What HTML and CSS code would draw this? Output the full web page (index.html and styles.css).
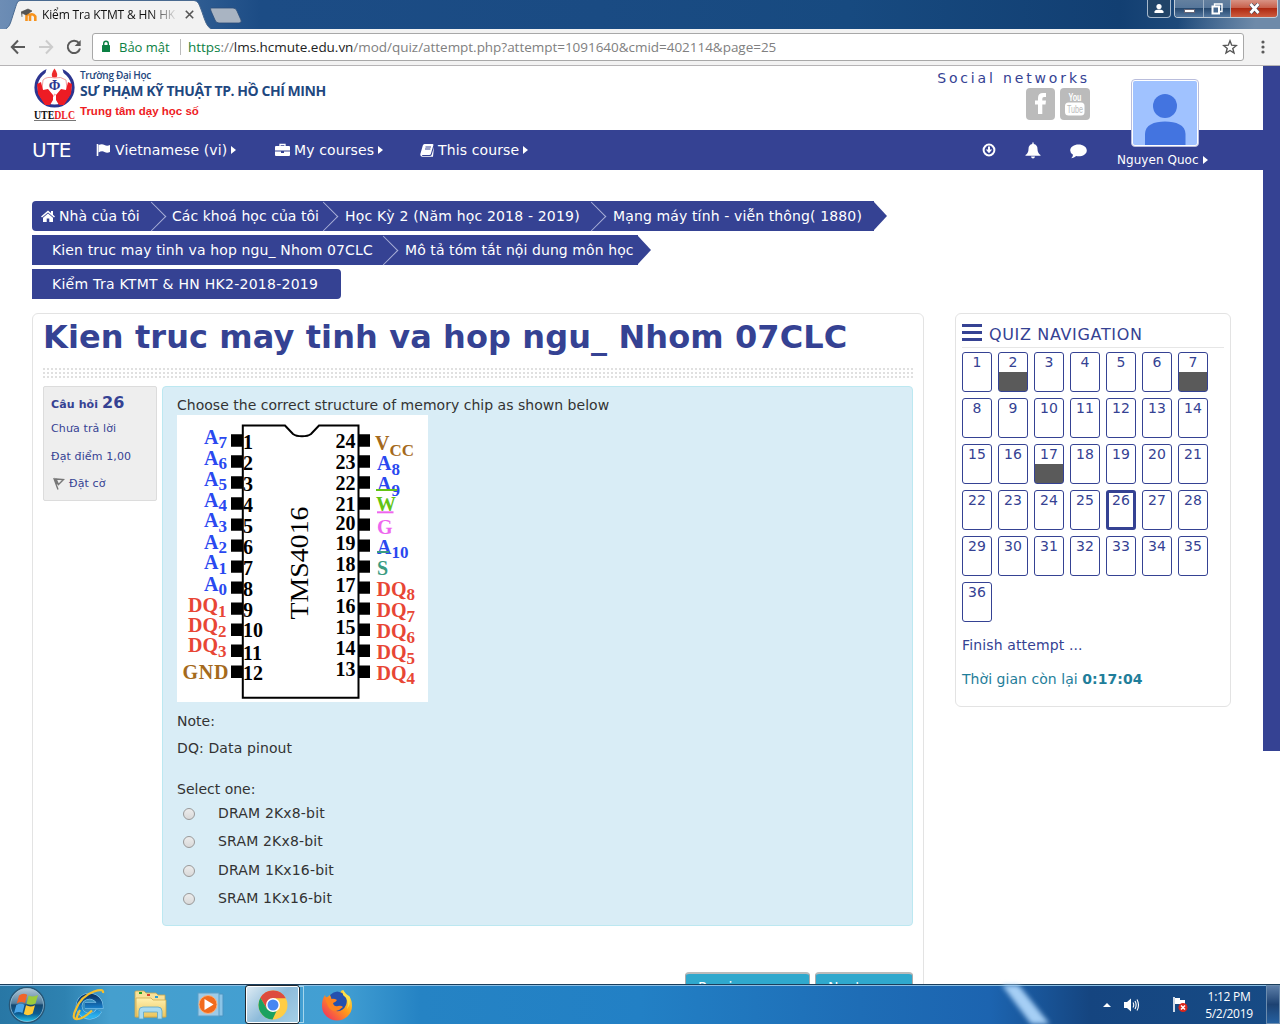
FILE: index.html
```html
<!DOCTYPE html>
<html lang="vi">
<head>
<meta charset="utf-8">
<title>Kiểm Tra KTMT &amp; HN HK2-2018-2019</title>
<link rel="stylesheet" href="styles.css">
</head>
<body>
<svg width="0" height="0" class="defs">
  <defs>
    <linearGradient id="orb" x1="0" y1="0" x2="0" y2="1"><stop offset="0" stop-color="#b9cbd8"/><stop offset=".45" stop-color="#547f9f"/><stop offset=".5" stop-color="#14476f"/><stop offset=".75" stop-color="#0c5c92"/><stop offset="1" stop-color="#25d0f5"/></linearGradient>
    <linearGradient id="ie" x1="0" y1="0" x2="0" y2="1"><stop offset="0" stop-color="#0b3a6c"/><stop offset=".5" stop-color="#1573bd"/><stop offset="1" stop-color="#2bb2ee"/></linearGradient>
    <linearGradient id="folder" x1="0" y1="0" x2="0" y2="1"><stop offset="0" stop-color="#fff1b0"/><stop offset="1" stop-color="#ecc55d"/></linearGradient>
    <linearGradient id="fox" x1="1" y1="0" x2="0" y2="1"><stop offset="0" stop-color="#fff04a"/><stop offset=".45" stop-color="#ff9a1a"/><stop offset="1" stop-color="#f0206a"/></linearGradient>
  </defs>
</svg>

<header class="titlebar">
  <svg class="tab-shape" width="250" height="29" viewBox="0 0 250 29">
    <path d="M6 29C10 27 11 21 14 12C17 3 17 1 21 1H194C198 1 199 4 202 12C205 21 207 27 211 29Z" fill="#f2f2f2"/>
    <path d="M6 28.500C10 27 11 21 14 12C17 3 17 .5 21 .5H194C198 .5 199 4 202 12C205 21 207 27 211 28.500" fill="none" stroke="#4a6a90"/>
    <path d="M211 8H233Q236 8 237 11L241 20Q242 23 239 23H219Q216 23 215 20L211 11Q210 8 211 8Z" fill="#a9b4c2" stroke="#2b4d78" stroke-width=".8"/>
  </svg>
  <div class="tab">
    <svg width="16" height="14" viewBox="0 0 16 14"><path d="M5.500 13V8.500Q5.500 6.300 7.300 6.300T9 8.500V13M9 13V8.500Q9 6.300 11 6.300T14.300 8.500V13" fill="none" stroke="#f7931e" stroke-width="2.600"/><path d="M0 4L7 1L11 3L5 7L1 5V9" fill="#555" stroke="#444" stroke-width=".6"/></svg>
    <span class="tab-title">Kiểm Tra KTMT &amp; HN HK</span>
    <svg class="tab-close" width="9" height="9" viewBox="0 0 9 9"><path d="M.8.8L8.200 8.200M8.200.8L.8 8.200" stroke="#555" stroke-width="1.600"/></svg>
  </div>
  <div class="window-buttons">
    <span class="wb user"><svg width="12" height="11" viewBox="0 0 12 11"><circle cx="6" cy="3.500" r="2.600" fill="#fff"/><path d="M1.500 10V8.500Q2 6.500 6 6.500T10.500 8.500V10Z" fill="#fff"/></svg></span>
    <span class="wb-group">
      <span class="wb min"><i class="bar"></i></span>
      <span class="wb max"><svg width="12" height="12" viewBox="0 0 12 12"><path d="M3.500 3V1H11V8.500H9" fill="none" stroke="#fff" stroke-width="1.400"/><rect x="1.500" y="3.500" width="6.500" height="7" fill="#486a90" stroke="#fff" stroke-width="2"/></svg></span>
      <span class="wb close"><svg width="13" height="11" viewBox="0 0 13 11"><path d="M2.500 1L10.500 10M10.500 1L2.500 10" stroke="#444b5e" stroke-width="4"/><path d="M2.500 1L10.500 10M10.500 1L2.500 10" stroke="#fff" stroke-width="2.700"/></svg></span>
    </span>
  </div>
</header>

<div class="toolbar">
  <svg class="nav-arrow" width="16" height="16" viewBox="0 0 16 16"><path d="M15 8H2M8 1.500L1.800 8L8 14.500" fill="none" stroke="#5a5a5a" stroke-width="2"/></svg>
  <svg class="nav-arrow" width="16" height="16" viewBox="0 0 16 16"><path d="M1 8H14M8 1.500L14.200 8L8 14.500" fill="none" stroke="#ccc" stroke-width="2"/></svg>
  <svg class="reload" width="16" height="16" viewBox="0 0 16 16"><path d="M13 4.200A6.200 6.200 0 1 0 14 9.500" fill="none" stroke="#5a5a5a" stroke-width="2"/><path d="M14.700 1V7H8.700Z" fill="#5a5a5a"/></svg>
  <div class="address">
    <svg width="10" height="13" viewBox="0 0 10 13"><rect x="1" y="5" width="8" height="7" rx=".6" fill="#0b8043"/><path d="M2.700 6V3.500A2.300 2.300 0 0 1 7.300 3.500V6" fill="none" stroke="#0b8043" stroke-width="1.400"/></svg>
    <span class="secure">Bảo mật</span>
    <span class="url"><b>https</b>://<em>lms.hcmute.edu.vn</em>/mod/quiz/attempt.php?attempt=1091640&amp;cmid=402114&amp;page=25</span>
    <svg class="star" width="16" height="16" viewBox="0 0 16 16"><path d="M8 1.800L9.700 6.200L14.400 6.500L10.800 9.500L12 14L8 11.500L4 14L5.200 9.500L1.600 6.500L6.300 6.200Z" fill="none" stroke="#555" stroke-width="1.400"/></svg>
  </div>
  <svg class="menu" width="4" height="16" viewBox="0 0 4 16"><g fill="#5a5a5a"><circle cx="2" cy="3" r="1.600"/><circle cx="2" cy="8" r="1.600"/><circle cx="2" cy="13" r="1.600"/></g></svg>
</div>

<div class="viewport">
  <div class="page">
    <div class="site-header">
      <div class="brand">
        <svg width="44" height="54" viewBox="0 0 44 54">
          <circle cx="21.500" cy="20.500" r="18.500" fill="#fff" stroke="#2d3590" stroke-width="3.200"/>
          <path d="M12 8A16 16 0 0 1 31 8L29 0H14Z" fill="#fff"/>
          <path d="M21.500 1.500Q17.500 7 19.500 10.500H23.500Q25.500 7 21.500 1.500Z" fill="#ee2b2b"/>
          <path d="M21.500 11Q14 9 10 13L9 22L14 29Q18 31 21 29L21.500 27Q25 31 29 29L34 22L33 13Q28 9 21.500 11Z" fill="#fff" stroke="#e88" stroke-width=".8"/>
          <path d="M4 17L8 15L10 23L15 22L20 28V33L17 38H12L5 27ZM39 17L35 15L33 23L28 22L23 28V33L26 38H31L38 27Z" fill="#ed1c24"/>
          <text x="21.500" y="23" class="phi">Φ</text>
          <text x="1" y="51.500" class="ute" textLength="41" lengthAdjust="spacingAndGlyphs">UTE<tspan fill="#ed1c24">DLC</tspan></text>
          <path d="M1 53.500H43" stroke="#777" stroke-width="1"/>
        </svg>
        <div class="brand-text">
          <span class="line-a">Trường Đại Học</span>
          <span class="line-b">SƯ PHẠM KỸ THUẬT TP. HỒ CHÍ MINH</span>
          <span class="line-c">Trung tâm dạy học số</span>
        </div>
      </div>
      <div class="social">
        <span class="social-title">Social networks</span>
        <div class="social-icons">
          <svg width="29" height="32" viewBox="0 0 29 32"><rect width="29" height="32" rx="4" fill="#bbb"/><path d="M12 26V16.500H9V12.500H12V10Q12 5 17 5H20V9H18Q16.300 9 16.300 10.800V12.500H20L19.500 16.500H16.300V26Z" fill="#fff"/></svg>
          <svg width="30" height="32" viewBox="0 0 30 32"><rect width="30" height="32" rx="4" fill="#bbb"/><text x="8.500" y="13" class="you" textLength="13" lengthAdjust="spacingAndGlyphs">You</text><rect x="5" y="14.500" width="19.500" height="13" rx="3.500" fill="#fff"/><text x="7" y="25" class="tube" textLength="16" lengthAdjust="spacingAndGlyphs">Tube</text></svg>
        </div>
      </div>
    </div>
    <nav class="navbar">
      <span class="site-name">UTE</span>
      <span class="nav-item lang"><svg width="15" height="14" viewBox="0 0 15 14"><path d="M1.500 1V13" stroke="#fff" stroke-width="1.600"/><path d="M2.500 2Q6 .5 8.500 2T14 2V9Q11 10.500 8.500 9T2.500 9.500Z" fill="#fff"/></svg><span>Vietnamese (vi)</span><i class="caret"></i></span>
      <span class="nav-item my"><svg width="15" height="14" viewBox="0 0 15 14"><path d="M5 3V1.500H10V3" fill="none" stroke="#fff" stroke-width="1.300"/><path d="M0 4Q0 3 1 3H14Q15 3 15 4V7.500H0ZM0 8.500H6V10H9V8.500H15V12Q15 13 14 13H1Q0 13 0 12Z" fill="#fff"/></svg><span>My courses</span><i class="caret"></i></span>
      <span class="nav-item this"><svg width="14" height="14" viewBox="0 0 14 14"><path d="M4.500 1H12.500Q13.800 1.200 13.300 2.500L10.800 11Q10.500 12 9.300 12H2.500Q1.500 12.500 2.500 13H10Q11.200 13 11.600 12L14 4L13 13.800H2Q-.3 13 .5 10.500L2.800 2.500Q3.200 1.200 4.500 1Z" fill="#fff"/><path d="M5.500 4H11M5 6H10.400" stroke="#354293"/></svg><span>This course</span><i class="caret"></i></span>
      <div class="nav-tools">
        <svg width="14" height="14" viewBox="0 0 14 14"><circle cx="7" cy="7" r="5.400" fill="none" stroke="#fff" stroke-width="2"/><path d="M6 3.500H8V6.500H10.200L7 10.200L3.800 6.500H6Z" fill="#fff"/></svg>
        <svg width="16" height="17" viewBox="0 0 16 17"><path d="M7.300.5H8.700V2Q12.500 2.800 12.500 7Q12.500 11 15.500 13V13.800H.5V13Q3.500 11 3.500 7Q3.500 2.800 7.300 2ZM6 14.500H10Q9.700 16.500 8 16.500T6 14.500Z" fill="#fff"/></svg>
        <svg class="bubble" width="17" height="15" viewBox="0 0 17 15"><path d="M8.500.5C13 .5 16.800 3 16.800 6.500S13 12.300 8.500 12.300Q7.200 12.300 6.200 12Q4.200 14 1.300 14.200Q3 12.700 3 10.800Q.2 9 .2 6.500C.2 3 4 .5 8.500.5Z" fill="#fff"/></svg>
      </div>
      <div class="user-menu">
        <svg class="avatar" width="68" height="68" viewBox="0 0 68 68"><rect x=".5" y=".5" width="67" height="67" rx="3.500" fill="#fff" stroke="#b9bddc"/><rect x="2" y="2" width="64" height="64" rx="2" fill="#a0c2ff"/><circle cx="34" cy="27" r="12" fill="#4374e0"/><path d="M14 66V55C14 46 23 42.500 34 42.500S54.500 46 54.500 55V66Z" fill="#4374e0"/></svg>
        <span class="user-name">Nguyen Quoc<i class="caret"></i></span>
      </div>
    </nav>

    <div class="crumbs">
      <div class="crumb-row">
        <span class="crumb home"><svg width="14" height="12" viewBox="0 0 14 12"><path d="M7 .5L10 3V1H12V4.800L14 6.500L13 7.500L7 2.500L1 7.500L0 6.500ZM7 3.600L12 7.800V12H8.300V8.500H5.700V12H2V7.800Z" fill="#fff"/></svg><span>Nhà của tôi</span></span>
        <span class="crumb courses sep"><span>Các khoá học của tôi</span></span>
        <span class="crumb term sep"><span>Học Kỳ 2 (Năm học 2018 - 2019)</span></span>
        <span class="crumb network sep tip"><span>Mạng máy tính - viễn thông( 1880)</span></span>
      </div>
      <div class="crumb-row">
        <span class="crumb subject"><span>Kien truc may tinh va hop ngu_ Nhom 07CLC</span></span>
        <span class="crumb summary sep tip"><span>Mô tả tóm tắt nội dung môn học</span></span>
      </div>
      <div class="crumb-row">
        <span class="crumb exam"><span>Kiểm Tra KTMT &amp; HN HK2-2018-2019</span></span>
      </div>
    </div>

    <div class="columns">
      <main class="panel">
        <h1>Kien truc may tinh va hop ngu_ Nhom 07CLC</h1>
        <div class="dots"></div>
        <div class="question">
          <aside class="info">
            <p class="q-no">Câu hỏi <b>26</b></p>
            <p class="q-state">Chưa trả lời</p>
            <p class="q-grade">Đạt điểm 1,00</p>
            <p class="q-flag"><svg width="12" height="13" viewBox="0 0 12 13"><path d="M.8 1L5 12.500M2.500 1.500L4 7.500M3 2L10.500 2.500L5.500 7.500Z" fill="none" stroke="#777" stroke-width="1.400"/></svg><span>Đặt cờ</span></p>
          </aside>
          <section class="formulation">
            <p class="q-text">Choose the correct structure of memory chip as shown below</p>
            <svg class="chip" width="251" height="287" viewBox="0 0 251 287">
              <rect width="251" height="287" fill="#fff"/>
              <path d="M65.800 10.500H108L116 19Q119 21.300 125 21.300Q131 21.300 134 19L142 10.500H181.500V282.800H65.800Z" fill="none" stroke="#000" stroke-width="2"/>
              <path d="M60 19.300V263" stroke="#000" stroke-width="12" stroke-dasharray="12.400 8.620"/>
              <path d="M187 19.300V263" stroke="#000" stroke-width="12" stroke-dasharray="12.400 8.620"/>
              <g class="num">
                <text x="66" y="34">1</text><text x="66" y="55">2</text><text x="66" y="76">3</text><text x="66" y="97">4</text><text x="66" y="118">5</text><text x="66" y="139">6</text><text x="66" y="160">7</text><text x="66" y="181">8</text><text x="66" y="201.500">9</text><text x="66" y="222">10</text><text x="66" y="244.500">11</text><text x="66" y="265">12</text>
              </g>
              <g class="num end">
                <text x="178.500" y="33">24</text><text x="178.500" y="53.500">23</text><text x="178.500" y="74.500">22</text><text x="178.500" y="95.500">21</text><text x="178.500" y="114.500">20</text><text x="178.500" y="135">19</text><text x="178.500" y="155.500">18</text><text x="178.500" y="177">17</text><text x="178.500" y="198">16</text><text x="178.500" y="219">15</text><text x="178.500" y="240">14</text><text x="178.500" y="261">13</text>
              </g>
              <g class="blue">
                <text x="27" y="28.700">A<tspan class="sub" dy="4.500">7</tspan></text><text x="27" y="49.700">A<tspan class="sub" dy="4.500">6</tspan></text><text x="27" y="70.700">A<tspan class="sub" dy="4.500">5</tspan></text><text x="27" y="91.700">A<tspan class="sub" dy="4.500">4</tspan></text><text x="27" y="112.300">A<tspan class="sub" dy="4.500">3</tspan></text><text x="27" y="133.700">A<tspan class="sub" dy="4.500">2</tspan></text><text x="27" y="154.300">A<tspan class="sub" dy="4.500">1</tspan></text><text x="27" y="175.700">A<tspan class="sub" dy="4.500">0</tspan></text>
                <text x="200" y="55">A<tspan class="sub" dy="4.500">8</tspan></text><text x="200" y="76">A<tspan class="sub" dy="4.500">9</tspan></text><text x="200" y="138.700">A<tspan class="sub" dy="4.500">10</tspan></text>
              </g>
              <g class="red">
                <text x="11" y="197.300">DQ<tspan class="sub" dy="4.500">1</tspan></text><text x="11" y="217.300">DQ<tspan class="sub" dy="4.500">2</tspan></text><text x="11" y="237">DQ<tspan class="sub" dy="4.500">3</tspan></text>
                <text x="199.500" y="180.700">DQ<tspan class="sub" dy="4.500">8</tspan></text><text x="199.500" y="202">DQ<tspan class="sub" dy="4.500">7</tspan></text><text x="199.500" y="223">DQ<tspan class="sub" dy="4.500">6</tspan></text><text x="199.500" y="244">DQ<tspan class="sub" dy="4.500">5</tspan></text><text x="199.500" y="264.700">DQ<tspan class="sub" dy="4.500">4</tspan></text>
              </g>
              <g class="brown"><text x="5.500" y="263.500" textLength="46">GND</text><text x="198" y="34.500">V<tspan class="sub" dy="6">CC</tspan></text></g>
              <text x="199" y="96" class="green">W</text><path d="M199 75H220" stroke="#62c414" stroke-width="2"/>
              <text x="200" y="118.700" class="pink">G</text><path d="M200 97.300H216.500" stroke="#ee66ee" stroke-width="2"/>
              <text x="200" y="160" class="teal">S</text><path d="M200 137H212" stroke="#3a9c82" stroke-width="2"/>
              <text class="part" transform="translate(130.500 204.500) rotate(-90)" textLength="113" lengthAdjust="spacingAndGlyphs">TMS4016</text>
            </svg>
            <p class="note">Note:</p>
            <p class="note-2">DQ: Data pinout</p>
            <p class="select">Select one:</p>
            <div class="answers">
              <label><input type="radio" name="a"><span>DRAM 2Kx8-bit</span></label>
              <label><input type="radio" name="a"><span>SRAM 2Kx8-bit</span></label>
              <label><input type="radio" name="a"><span>DRAM 1Kx16-bit</span></label>
              <label><input type="radio" name="a"><span>SRAM 1Kx16-bit</span></label>
            </div>
          </section>
        </div>
        <div class="buttons"><span class="btn previous">Previous page</span><span class="btn next">Next page</span></div>
      </main>
      <aside class="quiz-nav">
        <h2><svg width="20" height="17" viewBox="0 0 20 17"><path d="M0 1.500H20M0 8.500H20M0 15.500H20" stroke="#354293" stroke-width="3"/></svg><span>QUIZ NAVIGATION</span></h2>
        <div class="grid">
          <a>1</a><a class="done">2</a><a>3</a><a>4</a><a>5</a><a>6</a><a class="done">7</a>
          <a>8</a><a>9</a><a>10</a><a>11</a><a>12</a><a>13</a><a>14</a>
          <a>15</a><a>16</a><a class="done">17</a><a>18</a><a>19</a><a>20</a><a>21</a>
          <a>22</a><a>23</a><a>24</a><a>25</a><a class="current">26</a><a>27</a><a>28</a>
          <a>29</a><a>30</a><a>31</a><a>32</a><a>33</a><a>34</a><a>35</a>
          <a>36</a>
        </div>
        <p class="finish">Finish attempt ...</p>
        <p class="timer">Thời gian còn lại <b>0:17:04</b></p>
      </aside>
    </div>
  </div>
  <div class="scrollbar"><div class="thumb"></div></div>
</div>

<footer class="taskbar">
  <svg class="beam" width="90" height="40" viewBox="0 0 90 40"><path d="M10 0H27L59 40H40Z" fill="#a6cff5"/></svg>
  <div class="apps">
    <span class="slot start"><svg width="38" height="38" viewBox="0 0 38 38"><circle cx="19" cy="19" r="17.500" fill="url(#orb)" stroke="#285777" stroke-width="1.500"/><circle cx="19" cy="19" r="16.500" fill="none" stroke="#9cc5dd" stroke-width=".7"/><path d="M11 9.500Q15 6.500 19.200 8.800L17 17Q13 15 8.800 17.500Z" fill="#f0642a"/><path d="M20.700 9.500Q25 11.500 30 9L27.500 17.500Q23 20 18.500 17.700Z" fill="#9ccb3c"/><path d="M8.300 19Q12.500 16.700 16.600 18.700L14.400 27Q10.500 25 6 27.500Z" fill="#49a5e8"/><path d="M18 19.300Q22.500 21.500 27 19.200L24.700 27.500Q20 30.500 15.800 28Z" fill="#fdca37"/></svg></span>
    <span class="slot ie"><svg width="34" height="34" viewBox="0 0 34 34"><path d="M27 22.500A10.500 10 0 1 1 28 17.500H13" fill="none" stroke="#8fd0f5" stroke-width="6.400"/><path d="M27 22.500A10.500 10 0 1 1 28 17.500H13" fill="none" stroke="url(#ie)" stroke-width="5.400"/><path d="M8 22Q3 31 6 31Q11 31 20 22.500M6 31Q-1 32 3.500 22Q9 8 22 3.500Q32 0 31 5" fill="none" stroke="#f3bf2f" stroke-width="2.200"/></svg></span>
    <span class="slot explorer"><svg width="34" height="32" viewBox="0 0 34 32"><path d="M1 3Q1 2 2 2H10L12 4H22L24 6H31V28H1Z" fill="#f7e19a" stroke="#c9a64a" stroke-width=".8"/><path d="M21 7H24V9H21Z" fill="#2b9ed6"/><path d="M5 3H8V5H5Z" fill="#22a022"/><path d="M13 5H16V7H13Z" fill="#d8432e"/><path d="M2 9H17L19 11H32V28H2Z" fill="url(#folder)" stroke="#cfaa4b" stroke-width=".8"/><path d="M5 30V22Q5 18 9 18H24Q28 18 28 22V30H23.500V23H9.500V30Z" fill="#a9dbf1" stroke="#5ba6c9" stroke-width=".8"/></svg></span>
    <span class="slot media"><svg width="30" height="28" viewBox="0 0 30 28"><path d="M22 3H26V25H22" fill="#8cc4e6" stroke="#4b94c2"/><rect x="1" y="2" width="21" height="23" fill="#9ecbe7" stroke="#5a9fc8"/><circle cx="11" cy="13.500" r="9" fill="#f26b1d" stroke="#fbb27c"/><path d="M7.500 8L16.500 13.500L7.500 19Z" fill="#fff"/></svg></span>
    <span class="slot chrome"><svg width="30" height="30" viewBox="0 0 30 30"><circle cx="15" cy="15" r="14.500" fill="#ffcd46"/><path d="M15 8.300H27.800A14.500 14.500 0 0 0 2.440 7.750L9 19Z" fill="#dd4b3e"/><path d="M2.440 7.750L9 19Q12 22.500 18.500 21L14.500 29.500A14.500 14.500 0 0 1 2.440 7.750Z" fill="#1ba160"/><circle cx="15" cy="15" r="7" fill="#fff"/><circle cx="15" cy="15" r="5.500" fill="#4587f3"/></svg></span>
    <span class="stack"></span>
    <span class="slot firefox"><svg width="32" height="32" viewBox="0 0 32 32"><path d="M19 4Q20 1 22 1Q23 4 26 6L28 7Q31 11 31 17A15 14.500 0 0 1 1 17Q1 10 4 6L5 9L9 6H14L19 4Z" fill="url(#fox)"/><path d="M9 6Q16 -1 24 6Q27 11 25 16Q22 23 15 22Q10 20 10 15Q12 12 9 6Z" fill="#2450ae"/><path d="M4 8Q8 8 10 10Q13 9 16 11Q15 13 12 14Q13 18 17 17Q20 16 22 18Q19 21 15 22Q9 22 7 17Q5 13 4 8Z" fill="#ff8420"/><path d="M22 1Q25 6 29 8Q30 15 26 20Q29 11 22 6Z" fill="#ffe04a"/></svg></span>
  </div>
  <div class="tray">
    <i class="up"></i>
    <svg class="sound" width="17" height="16" viewBox="0 0 17 16"><path d="M1 5H4L8 1.500V14.500L4 11H1Z" fill="#fff"/><path d="M10 5.500Q11.500 8 10 10.500M12 4Q14.300 8 12 12M14 2.500Q17 8 14 13.500" fill="none" stroke="#fff" stroke-width="1.100"/></svg>
    <svg class="flag" width="17" height="17" viewBox="0 0 17 17"><path d="M2 1V16" stroke="#fff" stroke-width="1.600"/><path d="M3 2H8V4H13V10H8V8H3Z" fill="#fff"/><circle cx="11" cy="11.500" r="4.500" fill="#d9261c"/><path d="M9 9.500L13 13.500M13 9.500L9 13.500" stroke="#fff" stroke-width="1.500"/></svg>
    <div class="clock"><span>1:12 PM</span><span>5/2/2019</span></div>
    <span class="show-desktop"></span>
  </div>
</footer>
</body>
</html>
```

FILE: styles.css
```css
* { box-sizing: border-box; }
body { margin: 0; width: 1280px; height: 1024px; overflow: hidden; display: flex; flex-direction: column; background: #fff; font-family: "DejaVu Sans", Verdana, sans-serif; font-size: 14px; color: #333; }
p, h1, h2 { margin: 0; white-space: nowrap; }
svg { display: block; flex: none; }
.defs { position: absolute; }

.titlebar { position: relative; height: 29px; flex: none; background: linear-gradient(100deg, transparent 92%, #6e8aa9 98%), linear-gradient(90deg, #6d8db5 0, #4e77a7 90px, #1c4c85 260px, #1a4b83 600px, #174a80 850px, #123f72 1120px, #315b88); display: flex; justify-content: space-between; }
.tab-shape { position: absolute; left: 0; top: 0; }
.tab { position: relative; display: flex; align-items: center; height: 29px; padding-left: 21px; }
.tab-title { margin-left: 5px; width: 136px; overflow: hidden; white-space: nowrap; font: 12px/18px "Open Sans", sans-serif; letter-spacing: -0.15px; color: #111; -webkit-mask-image: linear-gradient(90deg, #000 80%, transparent); mask-image: linear-gradient(90deg, #000 80%, transparent); }
.tab-close { margin-left: 7px; }
.window-buttons { display: flex; gap: 3px; padding-right: 2px; height: 18px; }
.wb { display: flex; align-items: center; justify-content: center; height: 17px; background: linear-gradient(#64809f 0, #56769a 48%, #27496f 50%, #54779f); }
.user { width: 24px; border: 1px solid #a6b9cd; border-top: 0; border-radius: 0 0 4px 4px; background: #214468; height: 18px; }
.wb-group { display: flex; border: 1px solid #c3ced9; border-top: 0; border-radius: 0 0 4px 4px; overflow: hidden; height: 18px; }
.min { width: 28px; align-items: flex-end; padding-bottom: 4px; }
.bar { width: 11px; height: 4px; background: #fff; border: 1px solid #667; }
.max { width: 27px; border-left: 1px solid #9db0c4; }
.close { width: 47px; border-left: 1px solid #9db0c4; background: linear-gradient(#d89384 0, #c8614c 45%, #ae2a12 50%, #cd5b3e); }

.toolbar { height: 37px; flex: none; display: flex; align-items: center; padding: 0 0 1px 10px; background: #f2f2f2; border-bottom: 1px solid #b6b4b6; }
.nav-arrow { margin-right: 12px; }
.reload { margin-right: 10px; }
.address { display: flex; align-items: center; width: 1152px; height: 28px; border: 1px solid #a8a8a8; border-radius: 3px; background: #fff; padding-left: 8px; font: 14px/20px "Open Sans", sans-serif; }
.secure { color: #0b8043; margin-left: 8px; width: 62px; line-height: 16px; border-right: 1px solid #bbb; font-size: 13px; white-space: nowrap; letter-spacing: 0; }
.url { color: #808080; margin-left: 7px; white-space: nowrap; font-size: 13.5px; letter-spacing: -0.03px; }
.url b { font-weight: 400; color: #0b8043; }
.url em { font-style: normal; color: #222; }
.star { margin-left: auto; margin-right: 5px; }
.menu { margin-left: 17px; }

.viewport { height: 918px; flex: none; display: flex; overflow: hidden; }
.page { width: 1263px; flex: none; }
.scrollbar { width: 17px; }
.thumb { height: 685px; background: #354293; }

.site-header { height: 64px; display: flex; justify-content: space-between; padding: 0 173px 0 33px; color: #354293; }
.brand { display: flex; gap: 3px; padding-top: 1px; }
.phi { font: bold 14px "Liberation Serif", serif; fill: #2d3590; text-anchor: middle; }
.ute { font: bold 13px "Liberation Serif", serif; fill: #111; }
.brand-text { display: flex; flex-direction: column; white-space: nowrap; font-family: "Open Sans", sans-serif; font-weight: 600; color: #1f4880; }
.line-a { font-size: 10px; line-height: 17px; letter-spacing: -0.3px; }
.line-b { font-size: 14px; line-height: 13px; font-weight: 700; letter-spacing: -0.45px; }
.line-c { font: bold 11.5px/16px "Liberation Sans", sans-serif; color: #ee1c24; margin-top: 6px; }
.social { display: flex; flex-direction: column; align-items: flex-end; }
.social-title { line-height: 22px; height: 22px; letter-spacing: 2.85px; font-size: 14px; padding-top: 1px; }
.social-icons { display: flex; gap: 5px; }
.you { font: bold 11px "Liberation Sans", sans-serif; fill: #fff; }
.tube { font: 10px "Liberation Sans", sans-serif; fill: #bbb; }

.navbar { position: relative; height: 40px; background: #354293; color: #fff; display: flex; align-items: center; padding-left: 32px; white-space: nowrap; }
.site-name { font-size: 20px; width: 64px; }
.nav-item { display: flex; align-items: center; gap: 4px; letter-spacing: 0.13px; }
.caret { width: 0; height: 0; border: 4px solid transparent; border-left: 5px solid #fff; border-right: 0; }
.lang { width: 179px; }
.my { width: 145px; }
.nav-tools { display: flex; align-items: center; margin-left: auto; gap: 29px; padding-right: 176px; }
.bubble { margin-top: 2px; }
.user-menu { position: absolute; left: 1117px; top: -51px; width: 100px; }
.avatar { margin-left: 14px; }
.user-name { display: flex; align-items: center; gap: 4px; font-size: 12px; line-height: 16px; margin-top: 5px; letter-spacing: 0.05px; }

.crumbs { padding: 31px 0 0 32px; display: flex; flex-direction: column; gap: 4px; }
.crumb-row { display: flex; }
.crumb { position: relative; height: 30px; background: #354293; color: #fff; display: flex; align-items: center; white-space: nowrap; }
.sep::before { content: ""; position: absolute; left: -11px; top: 5px; width: 20px; height: 20px; border: 1px solid #aab1d8; border-left: 0; border-bottom: 0; transform: rotate(45deg); }
.tip::after { content: ""; position: absolute; left: 100%; top: 1px; border: 14px solid transparent; border-left: 13px solid #354293; border-right: 0; }
.home { width: 120px; padding-left: 9px; gap: 4px; border-radius: 4px 0 0 4px; letter-spacing: 0.08px; }
.courses { width: 172px; padding-left: 20px; letter-spacing: 0.04px; }
.term { width: 268px; padding-left: 21px; letter-spacing: 0.18px; }
.network { width: 282px; padding-left: 21px; letter-spacing: 0.13px; }
.subject { width: 352px; padding-left: 20px; letter-spacing: 0.14px; }
.summary { width: 254px; padding-left: 21px; letter-spacing: 0.08px; }
.exam { width: 309px; padding-left: 20px; border-radius: 0 4px 4px 0; letter-spacing: 0.27px; }

.columns { display: flex; align-items: flex-start; gap: 31px; padding: 14px 0 0 32px; }
.panel { width: 892px; height: 720px; border: 1px solid #e3e3e3; border-radius: 6px; padding: 0 10px; }
h1 { font-size: 32px; line-height: 46px; height: 54px; color: #354293; letter-spacing: 0.1px; }
.dots { height: 10px; background: radial-gradient(circle at 1px 1px, #e0e0e0 1.400px, transparent 1.500px) 0 0 / 4px 4px; }
.question { display: flex; align-items: flex-start; gap: 5px; margin-top: 8px; }
.info { width: 114px; height: 115px; background: #eee; border: 1px solid #dcdcdc; border-radius: 2px; padding: 3px 7px; color: #354293; font-size: 11px; letter-spacing: 0.12px; display: flex; flex-direction: column; }
.q-no { font-weight: 700; line-height: 26px; height: 25px; }
.q-no b { font-size: 16px; }
.q-state { line-height: 28px; }
.q-grade { line-height: 28px; }
.q-flag { display: flex; align-items: center; gap: 4px; height: 25px; padding-left: 2px; }
.formulation { width: 751px; height: 540px; background: #d9edf6; border: 1px solid #bce8f1; border-radius: 4px; padding: 8px 14px; }
.q-text { line-height: 20px; letter-spacing: 0.02px; }
.note { line-height: 27px; margin-top: 6px; }
.note-2 { line-height: 27px; letter-spacing: 0.12px; }
.select { line-height: 27px; margin-top: 14px; }
.answers label { display: flex; align-items: center; height: 28.300px; letter-spacing: 0.17px; }
.answers { margin-top: -4px; }
input { appearance: none; width: 12px; height: 12px; margin: 2px 23px 0 6px; border: 1px solid #999; border-radius: 50%; background: linear-gradient(#ececec, #d9d9d9); }
.buttons { display: flex; justify-content: flex-end; gap: 5px; margin-top: 46px; }
.btn { height: 40px; background: #2fa8cd; border: 1px solid #aaa; border-top: 2px solid #bbb; border-radius: 4px; color: #fff; padding: 5px 12px; }
.previous { width: 125px; }
.next { width: 98px; }

.quiz-nav { width: 276px; height: 394px; border: 1px solid #e3e3e3; border-radius: 6px; padding: 7px 6px 0; color: #354293; }
h2 { display: flex; align-items: center; gap: 7px; font-size: 16px; font-weight: 400; height: 27px; line-height: 27px; border-bottom: 1px solid #e6e6e6; letter-spacing: 0.65px; }
h2 svg { margin-top: -4px; }
.grid { display: grid; grid-template-columns: repeat(7, 30px); gap: 6px; margin-top: 4px; }
.grid a { height: 40px; border: 1px solid #354293; border-radius: 3px; text-align: center; line-height: 18px; }
.grid .done { background: linear-gradient(transparent 19px, #5a5a5a 19px); }
.grid .current { border-width: 3px; line-height: 14px; }
.finish { line-height: 20px; margin-top: 13px; letter-spacing: 0.13px; }
.timer { line-height: 20px; margin-top: 14px; color: #1f7e9a; letter-spacing: 0.05px; }

.num, .blue, .red, .brown, .green, .pink, .teal { font: bold 20px "Liberation Serif", serif; fill: #000; }
.end { text-anchor: end; }
.sub { font-size: 17px; }
.blue { fill: #2a48f0; }
.red { fill: #e84635; }
.brown { fill: #a56a1c; }
.green { fill: #62c414; }
.pink { fill: #ee66ee; }
.teal { fill: #3a9c82; }
.part { font: 26px "Liberation Serif", serif; fill: #000; }

.taskbar { position: relative; height: 40px; flex: none; display: flex; justify-content: space-between; border-top: 1px solid #1b3e5c; box-shadow: inset 0 1px #8cbfe4; background: linear-gradient(90deg, #2877a5 0, #2e82b1 65px, #459fce 110px, #429fd3 340px, #2583c4 420px, #2280c5 640px, #1e6db6 860px, #1c64b0 990px, #154580 1090px, #174b85 1280px); }
.beam { position: absolute; left: 991px; top: 0; height: 39px; filter: blur(2.5px); }
.apps { display: flex; align-items: center; }
.slot { display: flex; align-items: center; justify-content: center; height: 38px; width: 62px; }
.start { width: 54px; }
.ie { width: 70px; }
.explorer { width: 54px; }
.media { width: 68px; }
.chrome { width: 53px; border: 1px solid #fff; outline: 1px solid #20282f; outline-offset: 0; border-radius: 2px; background: linear-gradient(135deg, #dceaf3, #8dbbda 50%, #a4cfe6); height: 37px; }
.stack { width: 5px; height: 37px; border: 1px solid #a5d6ec; border-left: 0; }
.firefox { width: 66px; }
.tray { position: relative; display: flex; align-items: center; color: #fff; }
.up { border: 4px solid transparent; border-bottom: 4px solid #fff; border-top: 0; }
.sound { margin-left: 12px; }
.flag { margin-left: 32px; }
.clock { display: flex; flex-direction: column; align-items: center; width: 74px; margin-left: 3px; font: 12px/17px "Open Sans", sans-serif; letter-spacing: -0.3px; }
.show-desktop { width: 14px; height: 39px; border: 1px solid #6c8cae; background: linear-gradient(#5c7ea8, #1d4272 50%, #2560a0); }
```
